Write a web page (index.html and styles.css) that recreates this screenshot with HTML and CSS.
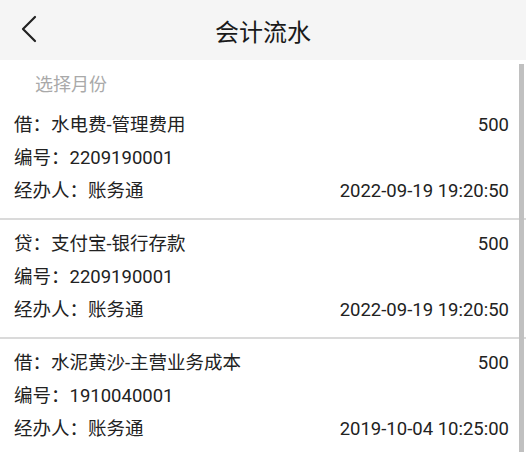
FILE: index.html
```html
<!DOCTYPE html>
<html lang="zh-CN">

<head>
    <meta charset="UTF-8">
    <title>会计流水</title>
    <link rel="stylesheet" href="styles.css">
</head>

<body>

    <div class="page">
        <div class="header">
            <div class="header__back">
                <svg width="20" height="30" viewBox="0 0 20 30">
                    <path d="M15 3 L3 15 L15 27" fill="none" stroke="#222" stroke-width="2.2" stroke-linecap="round" stroke-linejoin="round"/>
                </svg>
            </div>
            <div class="header__title">会计流水</div>
        </div>

        <div class="content">
            <div class="month">选择月份</div>

            <div class="record">
                <div class="record__row">
                    <span>借：水电费-管理费用</span>
                    <span>500</span>
                </div>
                <div class="record__row">
                    <span>编号：2209190001</span>
                </div>
                <div class="record__row">
                    <span>经办人：账务通</span>
                    <span>2022-09-19 19:20:50</span>
                </div>
            </div>

            <div class="record">
                <div class="record__row">
                    <span>贷：支付宝-银行存款</span>
                    <span>500</span>
                </div>
                <div class="record__row">
                    <span>编号：2209190001</span>
                </div>
                <div class="record__row">
                    <span>经办人：账务通</span>
                    <span>2022-09-19 19:20:50</span>
                </div>
            </div>

            <div class="record">
                <div class="record__row">
                    <span>借：水泥黄沙-主营业务成本</span>
                    <span>500</span>
                </div>
                <div class="record__row">
                    <span>编号：1910040001</span>
                </div>
                <div class="record__row">
                    <span>经办人：账务通</span>
                    <span>2019-10-04 10:25:00</span>
                </div>
            </div>

            <div class="content__scrollbar"></div>
        </div>
    </div>

</body>

</html>
```

FILE: styles.css
```css
* {
    padding: 0;
    margin: 0;
    box-sizing: border-box;
}

body {
    background-color: #ffffff;
    font-family: Roboto, "Noto Sans CJK SC", sans-serif;
    color: #222222;
}

.page {
    width: 526px;
    height: 452px;
    overflow: hidden;
}

.header {
    height: 60px;
    background-color: #f5f5f5;
    display: flex;
    align-items: center;
    justify-content: center;
    position: relative;
}

.header__back {
    position: absolute;
    left: 20px;
    top: 14px;
    width: 20px;
    height: 30px;
}

.header__title {
    font-size: 24px;
    color: #1a1a1a;
}

.content {
    position: relative;
    height: 392px;
}

.content__scrollbar {
    position: absolute;
    right: 2px;
    top: 4px;
    bottom: 0;
    width: 5px;
    background-color: #c0c0c0;
}

.month {
    height: 41px;
    padding: 14px 0 0 35px;
    font-size: 18px;
    line-height: 22px;
    color: #a9a9a9;
}

.record {
    padding: 8px 17px 10px 14px;
    border-bottom: 2px solid #dadada;
}

.record:last-of-type {
    border-bottom: none;
}

.record__row {
    display: flex;
    justify-content: space-between;
    font-size: 18.5px;
    line-height: 33px;
    height: 33px;
}
```
